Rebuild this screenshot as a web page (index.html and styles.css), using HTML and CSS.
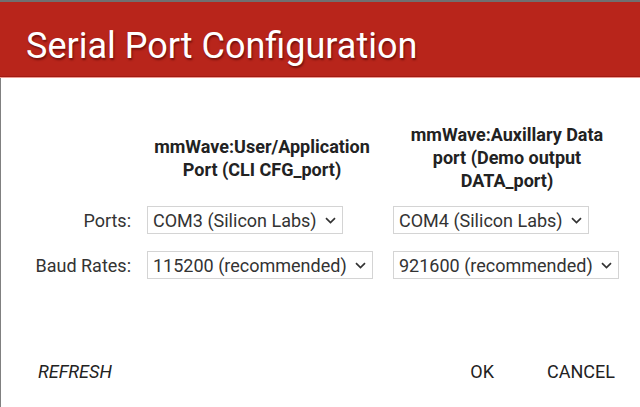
FILE: index.html
```html
<!DOCTYPE html>
<html>
<head>
<meta charset="utf-8">
<link rel="stylesheet" href="styles.css">
</head>
<body>
<div class="window-strip"></div>
<div class="dialog">
  <header class="dialog-header">
    <h1 class="dialog-title">Serial Port Configuration</h1>
  </header>
  <main class="dialog-body">
    <div class="grid headings">
      <div></div>
      <div class="col-heading">mmWave:User/Application<br>Port (CLI CFG_port)</div>
      <div class="col-heading">mmWave:Auxillary Data<br>port (Demo output<br>DATA_port)</div>
    </div>
    <div class="grid rows">
      <div class="row-label">Ports:</div>
      <div class="cell"><div class="select"><span>COM3 (Silicon Labs)</span><svg class="chev" width="11" height="7" viewBox="0 0 11 7"><path d="M1 1.2 L5.5 5.5 L10 1.2" fill="none" stroke="#333" stroke-width="1.7"/></svg></div></div>
      <div class="cell"><div class="select"><span>COM4 (Silicon Labs)</span><svg class="chev" width="11" height="7" viewBox="0 0 11 7"><path d="M1 1.2 L5.5 5.5 L10 1.2" fill="none" stroke="#333" stroke-width="1.7"/></svg></div></div>
      <div class="row-label">Baud Rates:</div>
      <div class="cell"><div class="select"><span>115200 (recommended)</span><svg class="chev" width="11" height="7" viewBox="0 0 11 7"><path d="M1 1.2 L5.5 5.5 L10 1.2" fill="none" stroke="#333" stroke-width="1.7"/></svg></div></div>
      <div class="cell"><div class="select"><span>921600 (recommended)</span><svg class="chev" width="11" height="7" viewBox="0 0 11 7"><path d="M1 1.2 L5.5 5.5 L10 1.2" fill="none" stroke="#333" stroke-width="1.7"/></svg></div></div>
    </div>
  </main>
  <footer class="dialog-actions">
    <button class="btn btn-refresh">REFRESH</button>
    <div class="spacer"></div>
    <button class="btn">OK</button>
    <button class="btn">CANCEL</button>
  </footer>
</div>
</body>
</html>
```
FILE: styles.css
```css
html, body {
  margin: 0;
  padding: 0;
  background: #ffffff;
  font-family: Roboto, "Liberation Sans", sans-serif;
  width: 640px;
  height: 407px;
  overflow: hidden;
}

.window-strip {
  height: 2px;
  background: #707070;
}

.dialog {
  height: 405px;
  display: flex;
  flex-direction: column;
}

.dialog-header {
  box-sizing: border-box;
  height: 75px;
  background: #b8251b;
  border-bottom: 1px solid #a01b13;
  box-shadow: 0 1px 0 #ef9a92;
  padding: 23px 0 0 26px;
  position: relative;
  z-index: 1;
}

.dialog-title {
  margin: 0;
  font-size: 36px;
  font-weight: 400;
  line-height: 42px;
  color: #ffffff;
  text-shadow: 1px 2px 2px rgba(60, 0, 0, 0.55);
}

.dialog-body {
  flex: 1;
  border-left: 1px solid #808080;
  padding-top: 46px;
}

.grid {
  display: grid;
  grid-template-columns: 130px 230px 228px;
  column-gap: 16px;
}

.headings {
  align-items: center;
  margin-bottom: 14px;
}

.col-heading {
  text-align: center;
  font-weight: 700;
  font-size: 18px;
  line-height: 23px;
  color: #222222;
}

.rows {
  row-gap: 17px;
  align-items: center;
}

.row-label {
  text-align: right;
  font-size: 18px;
  color: #333333;
}

.select {
  display: inline-flex;
  align-items: center;
  box-sizing: border-box;
  height: 28px;
  padding: 0 6px 0 5px;
  border: 1px solid #d4d4d4;
  font-size: 18px;
  color: #333333;
  gap: 8px;
}

.chev {
  display: block;
  margin-top: 1px;
}

.dialog-actions {
  display: flex;
  align-items: center;
  border-left: 1px solid #808080;
  padding: 0 9px 23px 21px;
  gap: 21px;
}

.spacer {
  flex: 1;
}

.btn {
  background: none;
  border: none;
  font-family: Roboto, "Liberation Sans", sans-serif;
  font-size: 18px;
  color: #222222;
  padding: 0 16px;
  height: 24px;
  line-height: 24px;
}

.btn-refresh {
  font-style: italic;
}
```
